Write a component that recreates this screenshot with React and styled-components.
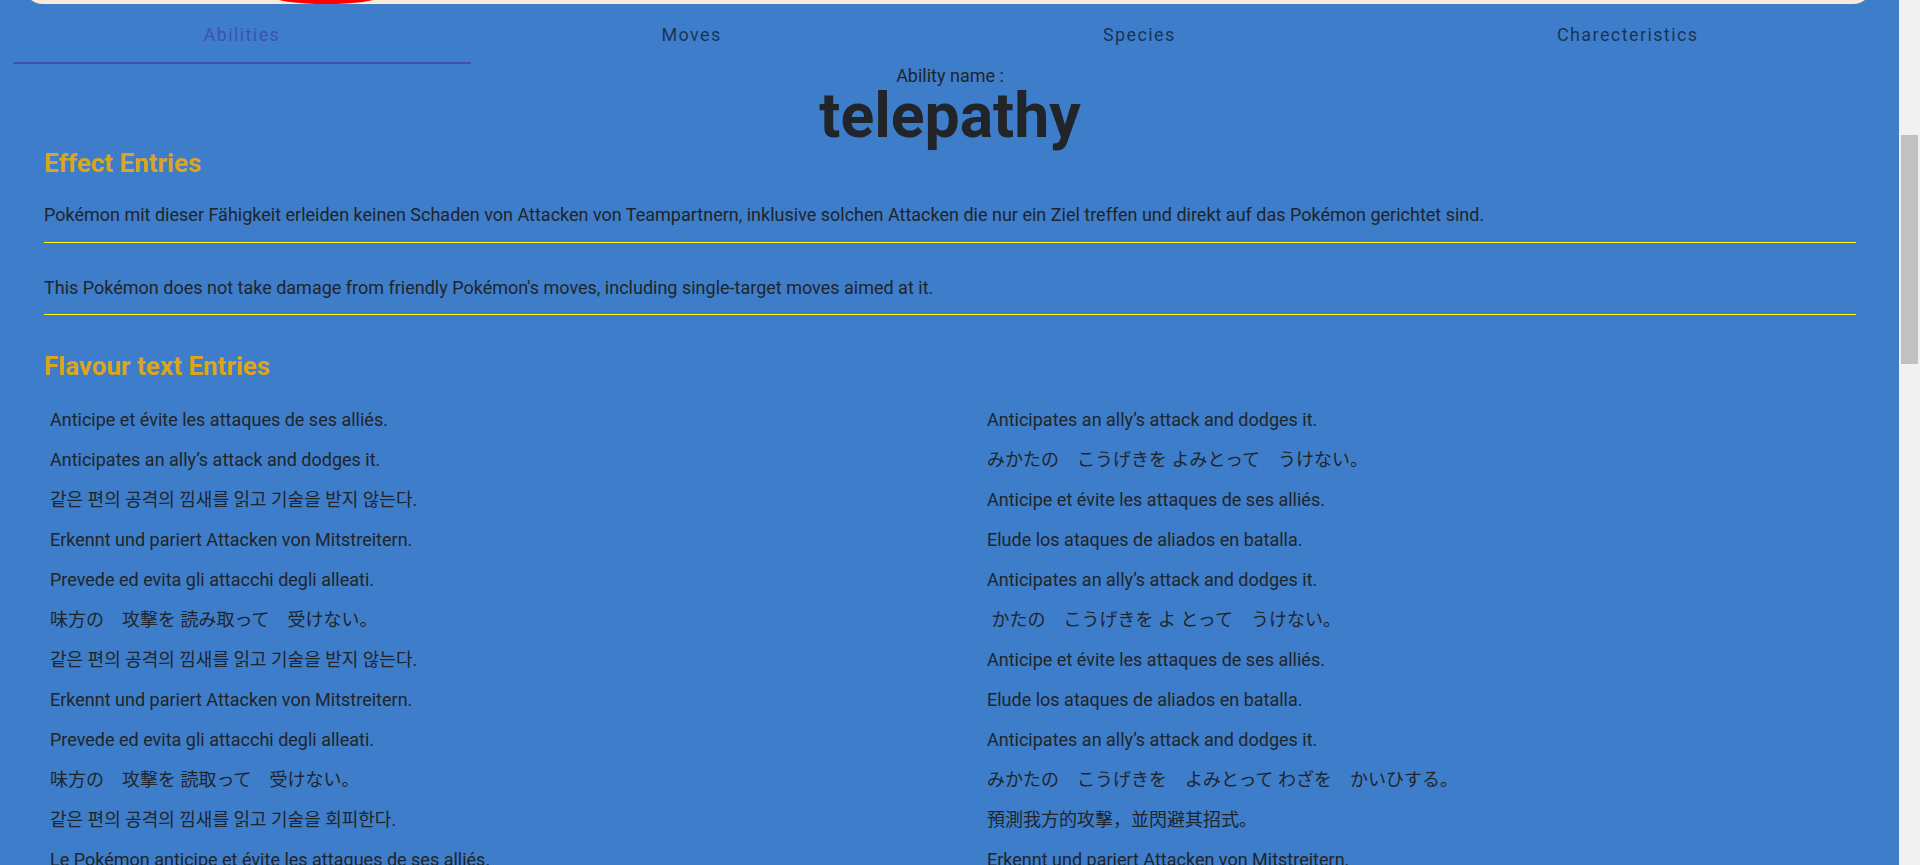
import React from "react";
import styled, { createGlobalStyle } from "styled-components";

const GlobalStyle = createGlobalStyle`
  body {
    margin: 0;
    background-color: #3d7dca;
    color: #212529;
    font-family: Roboto, "Noto Sans CJK JP", "Noto Sans CJK KR", "Noto Sans CJK TC", sans-serif;
  }
`;

const Shell = styled.div`
  display: flex;
  height: 100vh;
`;

const Main = styled.main`
  flex: 1;
  min-width: 0;
  overflow: hidden;
`;

// the browser's bar is hidden here, so the right edge is drawn by hand
const ScrollTrack = styled.div`
  width: 21px;
  flex-shrink: 0;
  box-sizing: border-box;
  padding: 135px 2px 0;
  background-color: #f1f1f1;
`;

const ScrollThumb = styled.div`
  height: 229px;
  background-color: #c1c1c1;
`;

const Page = styled.div`
  padding: 0 10px 40px 13px;
`;

const Banner = styled.div`
  height: 40px;
  margin: -36px 16px 0 10px;
  padding-left: 251px;
  background-color: antiquewhite;
  border-radius: 0 0 20px 20px;
  display: flex;
  align-items: flex-end;
`;

const Ball = styled.div`
  width: 104px;
  height: 14px;
  border-radius: 50%;
  background-color: red;
`;

const TabBar = styled.div`
  display: flex;
`;

const Tab = styled.button`
  flex: 1 1 auto;
  height: 60px;
  box-sizing: border-box;
  padding: 2px 16px 0;
  background: none;
  border: none;
  border-bottom: 2px solid ${(props) => (props.active ? "#3f51b5" : "transparent")};
  font-family: Roboto, sans-serif;
  font-size: 18px;
  font-weight: 400;
  letter-spacing: 1.4px;
  color: ${(props) => (props.active ? "#3f51b5" : "rgba(0, 0, 0, 0.6)")};
  cursor: pointer;
`;

const Content = styled.div`
  padding: 0 33px 0 31px;
`;

const AbilityHead = styled.div`
  text-align: center;
`;

const AbilityLabel = styled.div`
  margin-top: 1px;
  font-size: 18px;
  line-height: 22px;
`;

const AbilityName = styled.h1`
  margin: -2.5px 0 0;
  font-size: 62.5px;
  line-height: 62px;
  font-weight: 700;
`;

const SectionTitle = styled.h2`
  margin: ${(props) => props.top || "1.5px"} 0 0;
  font-size: 26px;
  line-height: 31px;
  font-weight: 700;
  color: goldenrod;
`;

const EffectList = styled.div`
  display: flex;
  flex-direction: column;
  gap: 9px;
`;

const EffectEntry = styled.p`
  margin: 0;
  padding: 22px 0 13.5px;
  border-bottom: 1px solid yellow;
  font-size: 18px;
  line-height: 27px;
`;

const FlavourGrid = styled.div`
  display: grid;
  grid-template-columns: 1fr 1fr;
  column-gap: 74px;
  row-gap: 13px;
  margin-top: 24px;
  padding: 0 6px;
`;

const FlavourText = styled.div`
  font-size: 18px;
  line-height: 27px;
  white-space: pre;
`;

const tabs = ["Abilities", "Moves", "Species", "Charecteristics"];

const effects = [
  "Pokémon mit dieser Fähigkeit erleiden keinen Schaden von Attacken von Teampartnern, inklusive solchen Attacken die nur ein Ziel treffen und direkt auf das Pokémon gerichtet sind.",
  "This Pokémon does not take damage from friendly Pokémon's moves, including single-target moves aimed at it.",
];

const flavourRows = [
  ["Anticipe et évite les attaques de ses alliés.", "Anticipates an ally’s attack and dodges it."],
  ["Anticipates an ally’s attack and dodges it.", "みかたの　こうげきを よみとって　うけない。"],
  ["같은 편의 공격의 낌새를 읽고 기술을 받지 않는다.", "Anticipe et évite les attaques de ses alliés."],
  ["Erkennt und pariert Attacken von Mitstreitern.", "Elude los ataques de aliados en batalla."],
  ["Prevede ed evita gli attacchi degli alleati.", "Anticipates an ally’s attack and dodges it."],
  ["味方の　攻撃を 読み取って　受けない。", " かたの　こうげきを よ とって　うけない。"],
  ["같은 편의 공격의 낌새를 읽고 기술을 받지 않는다.", "Anticipe et évite les attaques de ses alliés."],
  ["Erkennt und pariert Attacken von Mitstreitern.", "Elude los ataques de aliados en batalla."],
  ["Prevede ed evita gli attacchi degli alleati.", "Anticipates an ally’s attack and dodges it."],
  ["味方の　攻撃を 読取って　受けない。", "みかたの　こうげきを　よみとって わざを　かいひする。"],
  ["같은 편의 공격의 낌새를 읽고 기술을 회피한다.", "預測我方的攻擊，並閃避其招式。"],
  ["Le Pokémon anticipe et évite les attaques de ses alliés.", "Erkennt und pariert Attacken von Mitstreitern."],
  ["Prevede ed evita gli attacchi degli alleati.", "Elude los ataques de aliados en batalla."],
  ["Anticipates an ally’s attack and dodges it.", "味方の　攻撃を　読み取って　技を　回避する。"],
];

export default function App() {
  return (
    <>
      <GlobalStyle />
      <Shell>
        <Main>
          <Page>
            <Banner>
              <Ball />
            </Banner>
            <TabBar>
              {tabs.map((t, i) => (
                <Tab key={t} active={i === 0}>
                  {t}
                </Tab>
              ))}
            </TabBar>
            <Content>
              <AbilityHead>
                <AbilityLabel>Ability name :</AbilityLabel>
                <AbilityName>telepathy</AbilityName>
              </AbilityHead>
              <SectionTitle>Effect Entries</SectionTitle>
              <EffectList>
                {effects.map((e) => (
                  <EffectEntry key={e}>{e}</EffectEntry>
                ))}
              </EffectList>
              <SectionTitle top="35.5px">Flavour text Entries</SectionTitle>
              <FlavourGrid>
                {flavourRows.flat().map((text, i) => (
                  <FlavourText key={i}>{text}</FlavourText>
                ))}
              </FlavourGrid>
            </Content>
          </Page>
        </Main>
        <ScrollTrack>
          <ScrollThumb />
        </ScrollTrack>
      </Shell>
    </>
  );
}
